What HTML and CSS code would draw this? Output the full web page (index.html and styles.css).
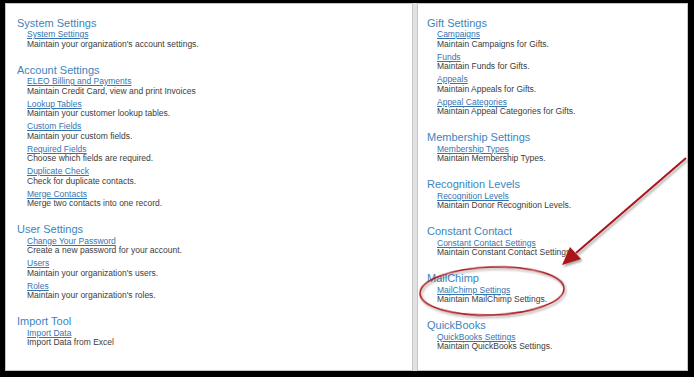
FILE: index.html
```html
<!DOCTYPE html>
<html lang="en">
<head>
  <meta charset="UTF-8">
  <meta name="viewport" content="width=device-width, initial-scale=1.0">
  <title>Settings</title>
  <link rel="stylesheet" href="styles.css">
</head>
<body>

  <div class="frame">
    <!-- LEFT COLUMN -->
    <div class="panel panel-left">
      <div class="section">
        <h3>System Settings</h3>
        <ul class="items">
          <li><a href="#">System Settings</a><span>Maintain your organization's account settings.</span></li>
        </ul>
      </div>

      <div class="section">
        <h3>Account Settings</h3>
        <ul class="items">
          <li><a href="#">ELEO Billing and Payments</a><span>Maintain Credit Card, view and print Invoices</span></li>
          <li><a href="#">Lookup Tables</a><span>Maintain your customer lookup tables.</span></li>
          <li><a href="#">Custom Fields</a><span>Maintain your custom fields.</span></li>
          <li><a href="#">Required Fields</a><span>Choose which fields are required.</span></li>
          <li><a href="#">Duplicate Check</a><span>Check for duplicate contacts.</span></li>
          <li><a href="#">Merge Contacts</a><span>Merge two contacts into one record.</span></li>
        </ul>
      </div>

      <div class="section">
        <h3>User Settings</h3>
        <ul class="items">
          <li><a href="#">Change Your Password</a><span>Create a new password for your account.</span></li>
          <li><a href="#">Users</a><span>Maintain your organization's users.</span></li>
          <li><a href="#">Roles</a><span>Maintain your organization's roles.</span></li>
        </ul>
      </div>

      <div class="section">
        <h3>Import Tool</h3>
        <ul class="items">
          <li><a href="#">Import Data</a><span>Import Data from Excel</span></li>
        </ul>
      </div>
    </div>

    <!-- RIGHT COLUMN -->
    <div class="panel panel-right">
      <div class="section">
        <h3>Gift Settings</h3>
        <ul class="items">
          <li><a href="#">Campaigns</a><span>Maintain Campaigns for Gifts.</span></li>
          <li><a href="#">Funds</a><span>Maintain Funds for Gifts.</span></li>
          <li><a href="#">Appeals</a><span>Maintain Appeals for Gifts.</span></li>
          <li><a href="#">Appeal Categories</a><span>Maintain Appeal Categories for Gifts.</span></li>
        </ul>
      </div>

      <div class="section">
        <h3>Membership Settings</h3>
        <ul class="items">
          <li><a href="#">Membership Types</a><span>Maintain Membership Types.</span></li>
        </ul>
      </div>

      <div class="section">
        <h3>Recognition Levels</h3>
        <ul class="items">
          <li><a href="#">Recognition Levels</a><span>Maintain Donor Recognition Levels.</span></li>
        </ul>
      </div>

      <div class="section">
        <h3>Constant Contact</h3>
        <ul class="items">
          <li><a href="#">Constant Contact Settings</a><span>Maintain Constant Contact Settings.</span></li>
        </ul>
      </div>

      <div class="section">
        <h3>MailChimp</h3>
        <ul class="items">
          <li><a href="#">MailChimp Settings</a><span>Maintain MailChimp Settings.</span></li>
        </ul>
      </div>

      <div class="section">
        <h3>QuickBooks</h3>
        <ul class="items">
          <li><a href="#">QuickBooks Settings</a><span>Maintain QuickBooks Settings.</span></li>
        </ul>
      </div>
    </div>
  </div>

  <!-- red annotation drawn over the page -->
  <svg class="markup" width="694" height="377" viewBox="0 0 694 377">
    <defs>
      <filter id="shadow" x="-20%" y="-20%" width="140%" height="140%">
        <feDropShadow dx="1.5" dy="2" stdDeviation="1.2" flood-color="#000" flood-opacity="0.35"/>
      </filter>
    </defs>
    <g filter="url(#shadow)">
      <line x1="686" y1="158" x2="576" y2="253" stroke="#a8161b" stroke-width="2"/>
      <polygon points="562,265 570,247 581,259" fill="#a8161b"/>
      <ellipse cx="492" cy="291" rx="72" ry="24" transform="rotate(-2 492 291)"
               fill="none" stroke="#a8161b" stroke-width="1.5"/>
    </g>
  </svg>

</body>
</html>
```

FILE: styles.css
```css
* {
  box-sizing: border-box;
}
body {
  margin: 0;
  height: 377px;
  padding: 3px 6px 6px 5px;
  background: #000;
  font-family: 'Liberation Sans', Arial, sans-serif;
  position: relative;
  overflow: hidden;
}
.frame {
  display: flex;
  gap: 4px;
  height: 100%;
  background: #e2e2e2;
}
.panel {
  background: #fff;
  border: 1px solid #c6c6c6;
  padding: 12.5px 0 0 11px;
}
.panel-left {
  width: 408px;
}
.panel-right {
  flex: 1;
  padding-left: 9px;
}
.section {
  margin-bottom: 14.5px;
}
h3 {
  margin: 0 0 1.5px;
  font-size: 11px;
  line-height: 12px;
  font-weight: normal;
  color: #3d84bd;
}
.items {
  list-style: none;
  margin: 0;
  padding: 0 0 0 10px;
  font-size: 8.5px;
  line-height: 9.5px;
}
.items li {
  display: flex;
  flex-direction: column;
  align-items: flex-start;
}
.items li + li {
  margin-top: 3.5px;
}
.items a {
  color: #3574b0;
  text-decoration: underline;
}
.items span {
  color: #3c3c3c;
}
.markup {
  position: absolute;
  top: 0;
  left: 0;
  pointer-events: none;
}
```
